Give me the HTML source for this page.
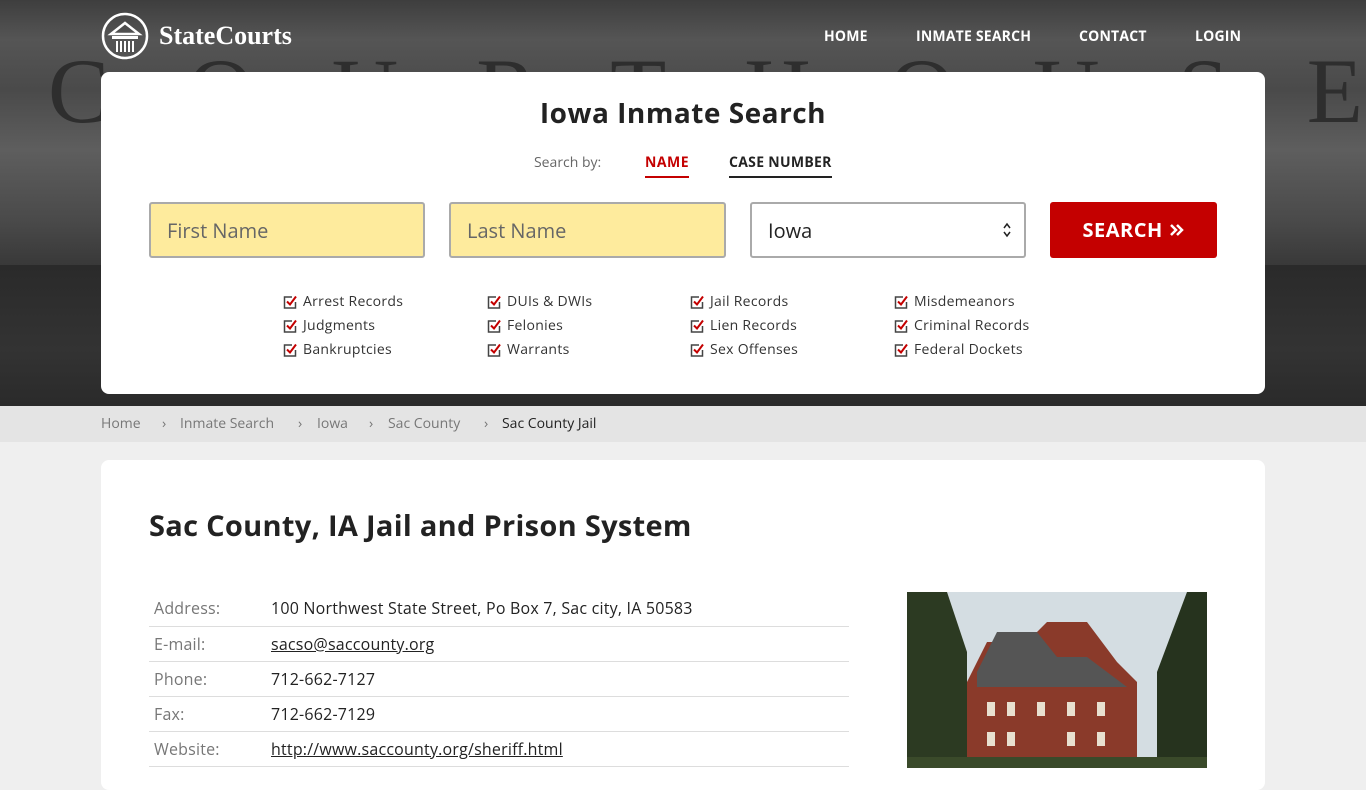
<!DOCTYPE html>
<html><head><meta charset="utf-8"><style>
*{box-sizing:border-box;margin:0;padding:0}
html,body{width:1366px;height:768px;overflow:hidden}
body{background:#efefef;font-family:"Open Sans","Liberation Sans",sans-serif;color:#222}
.hero{position:absolute;left:0;top:0;width:1366px;height:406px;background:
linear-gradient(180deg,#3e3e3e 0,#555 40px,#4a4a4a 90px,#5e5e5e 150px,#4a4a4a 220px,#3a3a3a 262px,#2c2c2c 300px,#262626 406px);overflow:hidden}
.hero .big{position:absolute;top:38px;left:48px;font-family:"Liberation Serif",serif;font-size:92px;letter-spacing:78px;color:#2e2e2e;white-space:nowrap}
.nav{position:absolute;top:27px;font-size:14px;font-weight:bold;color:#fff;letter-spacing:.2px}
.logo{position:absolute;left:101px;top:12px;display:flex;align-items:center;color:#fff;font-family:"Liberation Serif",serif;font-size:26px;font-weight:bold}
.card{position:absolute;left:101px;top:72px;width:1164px;height:322px;background:#fff;border-radius:8px}
h1{position:absolute;top:94px;width:100%;left:0;text-align:center;font-size:28px;font-weight:bold;letter-spacing:.5px}
.sb{position:absolute;top:153px;font-size:14px}
.in{position:absolute;top:202px;height:56px;border:2px solid #aaa;border-radius:3px;background:#feeb9d;font-size:20px;color:#666;padding:13px 16px}
.btn{position:absolute;left:1050px;top:202px;width:167px;height:56px;background:#c40000;border-radius:3px;color:#fff;font-weight:bold;font-size:20px;text-align:center;line-height:56px;letter-spacing:.5px}
.ck{position:absolute;font-size:14px;color:#333;display:flex;align-items:center;letter-spacing:.3px}
.ck svg{margin-right:6px}
.bc{position:absolute;top:406px;left:0;width:1366px;height:36px;background:#e4e4e4;font-size:14px;color:#777;line-height:36px}
.bc span{position:absolute}
.main{position:absolute;left:101px;top:460px;width:1164px;height:330px;background:#fff;border-radius:8px}
h2{position:absolute;left:149px;top:506px;font-size:29px;font-weight:bold;letter-spacing:.3px}
table{position:absolute;left:149px;top:591px;width:700px;border-collapse:collapse;font-size:16px}
td{height:35px;border-bottom:1px solid #ddd;padding-left:5px;letter-spacing:.2px}
td.l{color:#777;width:117px}
a{color:#222;text-decoration:underline}
</style></head><body>
<div class="hero"><div class="big">COURTHOUSE</div>
<div style="position:absolute;left:0;top:265px;width:1366px;height:141px;background:linear-gradient(180deg,#2a2a2a,#333 60%,#2a2a2a)"></div></div>
<div class="logo"><svg width="48" height="48" viewBox="0 0 48 48"><circle cx="24" cy="24" r="22" fill="none" stroke="#fff" stroke-width="2.5"/><path d="M10 22 L24 11 L38 22 Z" fill="none" stroke="#fff" stroke-width="2.5"/><rect x="11" y="24" width="26" height="3" fill="#fff"/><path d="M16 29v11M20 29v11M24 29v11M28 29v11M32 29v11" stroke="#fff" stroke-width="2"/></svg><span style="margin-left:10px">StateCourts</span></div>
<div class="nav" style="left:824px">HOME</div><div class="nav" style="left:916px">INMATE SEARCH</div><div class="nav" style="left:1079px">CONTACT</div><div class="nav" style="left:1195px">LOGIN</div>
<div class="card"></div>
<h1>Iowa Inmate Search</h1>
<div class="sb" style="left:534px;color:#666">Search by:</div>
<div class="sb" style="left:645px;color:#c40000;font-weight:bold;border-bottom:2px solid #c40000;padding-bottom:4px;letter-spacing:.5px">NAME</div>
<div class="sb" style="left:729px;font-weight:bold;border-bottom:2px solid #222;padding-bottom:4px;letter-spacing:.3px">CASE NUMBER</div>
<div class="in" style="left:149px;width:276px">First Name</div>
<div class="in" style="left:449px;width:277px">Last Name</div>
<div class="in" style="left:750px;width:276px;background:#fff;color:#222">Iowa<svg style="position:absolute;right:12px;top:17px" width="10" height="18" viewBox="0 0 10 18"><path d="M2 7l3-4 3 4M2 11l3 4 3-4" fill="none" stroke="#222" stroke-width="1.5"/></svg></div>
<div class="btn">SEARCH <svg width="16" height="16" viewBox="0 0 16 16" style="vertical-align:-1px"><path d="M3 3l5 5-5 5M9 3l5 5-5 5" fill="none" stroke="#fff" stroke-width="2.5"/></svg></div>
<div id="cks"></div>
<script>
var c=[["Arrest Records","Judgments","Bankruptcies"],["DUIs &amp; DWIs","Felonies","Warrants"],["Jail Records","Lien Records","Sex Offenses"],["Misdemeanors","Criminal Records","Federal Dockets"]],x=[283,487,690,894],h="";
var ic='<svg width="14" height="14" viewBox="0 0 14 14"><path d="M9 2H1.5v11h11V7" fill="none" stroke="#444" stroke-width="1.5"/><path d="M4 6.5l3 3 6-8" fill="none" stroke="#c40000" stroke-width="2"/></svg>';
for(var i=0;i<4;i++)for(var j=0;j<3;j++)h+='<div class="ck" style="left:'+x[i]+'px;top:'+(292+24*j)+'px">'+ic+c[i][j]+'</div>';
document.getElementById('cks').innerHTML=h;
</script>
<div class="bc"><span style="left:101px">Home</span><span style="left:162px">›</span><span style="left:180px">Inmate Search</span><span style="left:298px">›</span><span style="left:317px">Iowa</span><span style="left:369px">›</span><span style="left:388px">Sac County</span><span style="left:484px">›</span><span style="left:502px;color:#222">Sac County Jail</span></div>
<div class="main"></div>
<h2>Sac County, IA Jail and Prison System</h2>
<table>
<tr><td class="l">Address:</td><td>100 Northwest State Street, Po Box 7, Sac city, IA 50583</td></tr>
<tr><td class="l">E-mail:</td><td><a>sacso@saccounty.org</a></td></tr>
<tr><td class="l">Phone:</td><td>712-662-7127</td></tr>
<tr><td class="l">Fax:</td><td>712-662-7129</td></tr>
<tr><td class="l">Website:</td><td><a>http://www.saccounty.org/sheriff.html</a></td></tr>
</table>
<svg style="position:absolute;left:907px;top:592px" width="300" height="176" viewBox="0 0 300 176">
<rect width="300" height="176" fill="#d4dde2"/>
<path d="M0 0h40l20 60v116H0Z" fill="#2c3a22"/><path d="M300 0h-20l-30 80v96h50Z" fill="#26331e"/>
<path d="M60 176V90L80 50h40l20-20h40l30 40 20 20v86Z" fill="#8a3a2a"/>
<path d="M70 80L90 40h40l20 25h30l40 30H70Z" fill="#555"/>
<g fill="#e8e0d0"><rect x="80" y="110" width="8" height="14"/><rect x="100" y="110" width="8" height="14"/><rect x="130" y="110" width="8" height="14"/><rect x="160" y="110" width="8" height="14"/><rect x="190" y="110" width="8" height="14"/><rect x="80" y="140" width="8" height="14"/><rect x="100" y="140" width="8" height="14"/><rect x="160" y="140" width="8" height="14"/><rect x="190" y="140" width="8" height="14"/></g>
<rect x="0" y="165" width="300" height="11" fill="#3a4a2a"/>
</svg>
</body></html>
